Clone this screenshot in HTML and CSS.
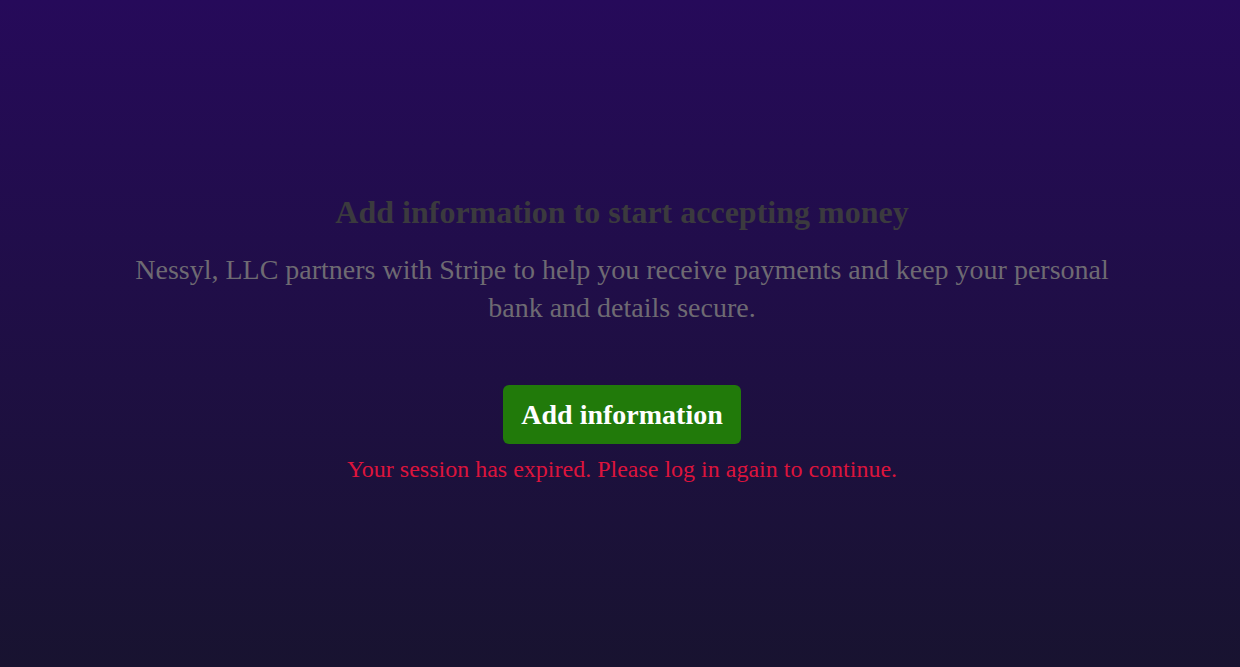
FILE: index.html
```html
<!DOCTYPE html>
<html lang="en">
<head>
<meta charset="utf-8">
<title>Add information</title>
<link rel="stylesheet" href="styles.css">
</head>
<body>
<main class="page">
  <section class="panel">
    <h1 class="title">Add information to start accepting money</h1>
    <p class="lead">Nessyl, LLC partners with Stripe to help you receive payments and keep your personal bank and details secure.</p>
    <button class="cta" type="button">Add information</button>
    <p class="error">Your session has expired. Please log in again to continue.</p>
  </section>
</main>
</body>
</html>
```

FILE: styles.css
```css
html, body {
  margin: 0;
  padding: 0;
  height: 100%;
}
body {
  background: linear-gradient(180deg, #260a5a 0%, #181330 100%);
  font-family: "Liberation Serif", "Times New Roman", serif;
}
.page {
  box-sizing: border-box;
  min-height: 100%;
  padding: 10px 0 0 4px;
  display: flex;
  align-items: center;
  justify-content: center;
}
.panel {
  display: flex;
  flex-direction: column;
  align-items: center;
  text-align: center;
  max-width: 1000px;
}
.title {
  margin: 0;
  font-size: 32px;
  font-weight: bold;
  color: #3b3a3e;
  line-height: 37px;
}
.lead {
  margin: 20px 0 0;
  font-size: 28px;
  line-height: 38px;
  color: #6e6a72;
}
.cta {
  margin-top: 58px;
  background: #217a0a;
  color: #ffffff;
  border: none;
  border-radius: 6px;
  font-family: inherit;
  font-size: 28px;
  font-weight: bold;
  padding: 12px 18px;
  line-height: 35px;
  cursor: pointer;
}
.error {
  margin: 10px 0 0;
  font-size: 24px;
  line-height: 30px;
  color: #dc143c;
}
```
